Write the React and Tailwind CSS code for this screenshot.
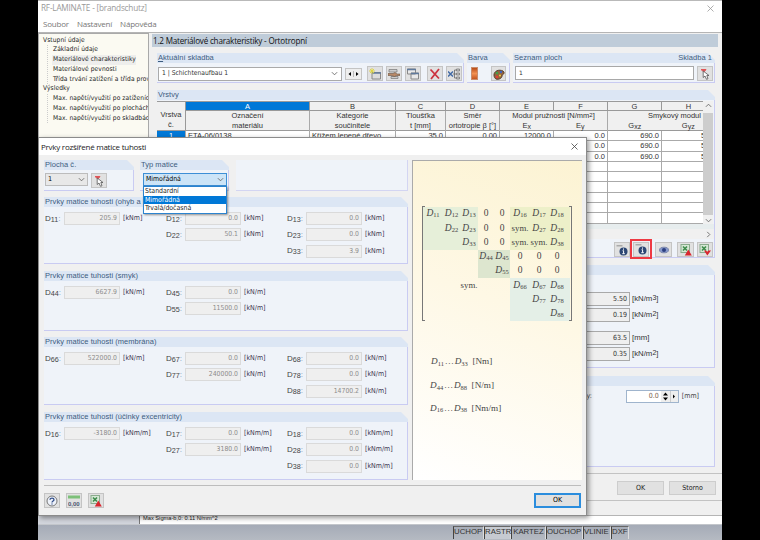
const matrixGroups = [
  {
    title: "Prvky matice tuhosti (ohyb a krut)",
    unit: "[kNm]",
    className: "mt-[6px] h-[67px]",
    rows: [
      [["11", "205.9"], ["12", "0.0"], ["13", "0.0"]],
      [null, ["22", "50.1"], ["23", "0.0"]],
      [null, null, ["33", "3.9"]],
    ],
  },
  {
    title: "Prvky matice tuhosti (smyk)",
    unit: "[kN/m]",
    className: "mt-[7px] h-[60px]",
    rows: [
      [["44", "6627.9"], ["45", "0.0"], null],
      [null, ["55", "11500.0"], null],
    ],
  },
  {
    title: "Prvky matice tuhosti (membrána)",
    unit: "[kN/m]",
    className: "mt-[6px] h-[68px]",
    rows: [
      [["66", "522000.0"], ["67", "0.0"], ["68", "0.0"]],
      [null, ["77", "240000.0"], ["78", "0.0"]],
      [null, null, ["88", "14700.2"]],
    ],
  },
  {
    title: "Prvky matice tuhosti (účinky excentricity)",
    unit: "[kNm/m]",
    className: "mt-[7px] h-[68px]",
    rows: [
      [["16", "-3180.0"], ["17", "0.0"], ["18", "0.0"]],
      [null, ["27", "3180.0"], ["28", "0.0"]],
      [null, null, ["38", "0.0"]],
    ],
  },
]

const stiffness = [
  ["11", "12", "13", "0", "0", "16", "17", "18"],
  ["", "22", "23", "0", "0", "sym.", "27", "28"],
  ["", "", "33", "0", "0", "sym.", "sym.", "38"],
  ["", "", "", "44", "45", "0", "0", "0"],
  ["", "", "", "", "55", "0", "0", "0"],
  ["", "", "sym.", "", "", "66", "67", "68"],
  ["", "", "", "", "", "", "77", "78"],
  ["", "", "", "", "", "", "", "88"],
]

const columns = [
  { id: "A", top: "Označení", bottom: "materiálu" },
  { id: "B", top: "Kategorie", bottom: "součinitele" },
  { id: "C", top: "Tloušťka", bottom: "t [mm]" },
  { id: "D", top: "Směr", bottom: "ortotropie β [°]" },
  { id: "E", bottom: "E", sub: "x" },
  { id: "F", bottom: "E", sub: "y" },
  { id: "G", bottom: "G", sub: "xz" },
  { id: "H", bottom: "G", sub: "yz" },
]

const layers = [
  ["1", "ETA-06/0138", "Křížem lepené dřevo", "35.0", "0.00", "12000.0", "0.0", "690.0", "50.0"],
  ["2", "", "", "", "", "", "0.0", "690.0", "50.0"],
  ["3", "", "", "", "", "", "0.0", "690.0", "50.0"],
  [], [], [], [], [], [],
]

const tableGrid = "grid grid-cols-[29px_124px_86px_50px_54px_54px_54px_54px_54px]"

const Group = ({ title, right, className = "", children }) => (
  <div className={`flex flex-col ${className}`}>
    <div className="flex h-[10px] shrink-0 items-center justify-between bg-[#dce6f4] pr-[3px] pl-[1px] text-[7.5px] leading-none tracking-[0.05px] whitespace-nowrap text-[#3c5c80] [clip-path:polygon(0_0,calc(100%-7px)_0,100%_7px,100%_100%,0_100%)]">
      <span>{title}</span>
      {right && <span>{right}</span>}
    </div>
    <div className="min-h-0 flex-1 border-r border-b border-[#c9cbf2] bg-[#eff3f9]">{children}</div>
  </div>
)

const IconButton = ({ className = "w-[16px]", children }) => (
  <div className={`flex h-[15px] shrink-0 items-center justify-center border border-[#c4c4c4] bg-[#e1e1e1] ${className}`}>
    <svg width="12" height="12" viewBox="0 0 12 12" fill="none">
      {children}
    </svg>
  </div>
)

const Chevron = ({ className = "", d = "M1 2.5 4 5.5 7 2.5" }) => (
  <svg className={className} width="7" height="7" viewBox="0 0 8 8" fill="none" stroke="#666" strokeWidth="1">
    <path d={d} />
  </svg>
)

const PickIcon = () => (
  <>
    <path d="M2 1.5h5L5 4Z" fill="#e05558" stroke="#e05558" />
    <path d="M4.200 3v6.500l1.800-1.500 1.500 3.300 1.500-.6L7.800 7.500H10Z" fill="#fff" stroke="#555" strokeWidth=".8" />
  </>
)

const ExcelIcon = ({ down }) => (
  <>
    <rect x="1" y=".5" width="8.500" height="8" fill="#d5e8d5" stroke="#8aab8d" />
    <path d="m3 2.500 4 4M7 2.500l-4 4" stroke="#3d8b4b" strokeWidth="1.600" />
    <path d={down ? "M5 6.500h2l1.200 1.200L9.500 6.500H12L8.300 11.500Z" : "M4.800 11.500 8.300 5.500l3.500 6Z"} fill="#d9262f" />
  </>
)

const InfoIcon = () => (
  <>
    <path d="M.5 1h6v1.5h-6z" fill="#aaa" />
    <circle cx="7.5" cy="7.5" r="4" fill="#2c4674" />
    <path d="M7.5 4.5v1.2M6.6 6.7h1v2.8M6.3 9.7h2.5" stroke="#fff" strokeWidth="1" />
  </>
)

const Sym = ({ n }) => (
  <>
    <i>D</i>
    <span className="relative top-[1.5px] text-[6.5px]">{n}</span>
  </>
)

const Matrix = () => (
  <div className="relative mt-[45px] ml-[9px] h-[115px] w-[150px]">
    <div className="absolute inset-y-0 left-0 w-[3px] border-y border-l border-[#777]" />
    <div className="absolute inset-y-0 right-0 w-[3px] border-y border-r border-[#777]" />
    <div className="grid h-full grid-cols-[20px_17px_18px_16px_16px_20px_18px_22px] grid-rows-8 pt-px pl-px font-['Liberation_Serif',serif] text-[9.5px] leading-none text-[#454545]">
      {stiffness.map((row, r) =>
        row.map((cell, c) => {
          let bg = ""
          if (r < 3 && c < 3) bg = "bg-[#e6efd9]"
          if (r < 3 && c > 4) bg = "bg-[#edf0c9]"
          if ((r === 3 || r === 4) && (c === 3 || c === 4)) bg = "bg-[#dde6cf]"
          if (r > 4 && c > 4) bg = "bg-[#e4efe7]"
          return (
            <div key={`${r}-${c}`} className={`flex items-center justify-center whitespace-nowrap ${c === 7 ? "pr-[4px]" : ""} ${bg}`}>
              {cell.length === 2 ? <Sym n={cell} /> : cell === "sym." ? <span className="text-[8.8px]">sym.</span> : cell}
            </div>
          )
        }),
      )}
    </div>
  </div>
)

const Field = ({ entry, unit }) => {
  if (!entry) return <div />
  return (
    <div className="flex items-center">
      <div className="w-[19px] text-[8px] whitespace-nowrap text-[#444]">
        D<span className="relative top-[1px] text-[7.2px]">{entry[0]}</span>
        <span className="text-[#7b9ac0]">:</span>
      </div>
      <div className="h-[13px] w-[56px] border border-[#dadada] bg-[#efefef] pr-[2px] text-right font-['DejaVu_Sans_Condensed','DejaVu_Sans',sans-serif] text-[6.8px] leading-[11px] text-[#8c8c8c]">
        {entry[1]}
      </div>
      <div className="ml-[3px] font-['DejaVu_Sans_Condensed','DejaVu_Sans',sans-serif] text-[7px] whitespace-nowrap text-[#3c3550]">{unit}</div>
    </div>
  )
}

const Dialog = () => (
  <div className="absolute top-[137px] left-0 flex h-[379px] w-[549px] flex-col border border-[#8b8b8b] bg-[#f0f0f0] shadow-[2px_2px_5px_rgba(0,0,0,0.4)]">
    <div className="flex h-[17px] shrink-0 items-center justify-between bg-white pr-[8px] pl-[2px] font-['Open_Sans',sans-serif] text-[8px] tracking-[-0.25px] text-[#222]">
      <span>Prvky rozšířené matice tuhosti</span>
      <svg width="7" height="7" viewBox="0 0 7 7" stroke="#444" strokeWidth=".8">
        <path d="m.5.5 6 6m0-6-6 6" />
      </svg>
    </div>
    <div className="flex h-[330px] shrink-0 pt-[5px] pr-[4px] pl-[5px]">
      <div className="w-[364px]">
        <div className="flex h-[31px]">
          <Group title="Plocha č." className="w-[90px]">
            <div className="flex gap-[3px] pt-[3px] pl-[1px]">
              <div className="flex h-[13px] w-[43px] items-center justify-between border border-[#bcbcbc] bg-[#e8e8e8] px-[2px] font-['DejaVu_Sans',sans-serif] text-[6.5px]">
                1 <Chevron />
              </div>
              <IconButton><PickIcon /></IconButton>
            </div>
          </Group>
          <Group title="Typ matice" className="ml-[6px] w-[89px]">
            <div className="relative mt-[3px] ml-[3px] w-[84px] font-['DejaVu_Sans_Condensed','DejaVu_Sans',sans-serif] text-[6.9px]">
              <div className="flex h-[13px] items-center justify-between border border-[#3d8fd6] bg-[#cce4f7] px-[2px] text-black">
                Mimořádná <Chevron />
              </div>
              <div className="absolute top-[13px] left-0 z-10 w-full border border-[#2b83cf] bg-white leading-[8.6px] text-[#222] shadow-[1px_1px_2px_rgba(0,0,0,0.4)]">
                <div className="pl-[1px]">Standardní</div>
                <div className="bg-[#0078d7] pl-[1px] text-white">Mimořádná</div>
                <div className="pl-[1px]">Trvalá/dočasná</div>
              </div>
            </div>
          </Group>
          <div className="ml-[7px] flex-1 border-r border-b border-[#d3d5f2] bg-[#eff3f9]" />
        </div>
        {matrixGroups.map((group) => (
          <Group key={group.title} title={group.title} className={group.className}>
            <div className="flex flex-col gap-[3.3px] pt-[5px] pl-[1px]">
              {group.rows.map((row, i) => (
                <div key={i} className="grid h-[13px] grid-cols-[121px_121px_120px] leading-none">
                  {row.map((entry, j) => (
                    <Field key={j} entry={entry} unit={group.unit} />
                  ))}
                </div>
              ))}
            </div>
          </Group>
        ))}
      </div>
      <div className="ml-[4px] h-[320px] w-[170px] border-t border-l border-[#aaa] bg-[linear-gradient(200deg,#fcf3d3_0%,#fef8e5_45%,#ffffff_100%)]">
        <Matrix />
        <div className="mt-[34px] ml-[17px] font-['Liberation_Serif',serif] text-[9.2px] leading-[12px] whitespace-nowrap text-[#454545]">
          <div className="ml-px h-[12px]"><Sym n="11" />&#8202;…&#8202;<Sym n="33" />&ensp;[Nm]</div>
          <div className="mt-[12px] h-[12px]"><Sym n="44" />&#8202;…&#8202;<Sym n="88" />&ensp;[N/m]</div>
          <div className="mt-[10.5px] h-[12px]"><Sym n="16" />&#8202;…&#8202;<Sym n="38" />&ensp;[Nm/m]</div>
        </div>
      </div>
    </div>
    <div className="mx-[5px] flex flex-1 justify-between border-t border-[#bdbdbd] pt-[7px]">
      <div className="flex gap-[6px]">
        <IconButton>
          <circle cx="6" cy="6" r="5" fill="#eef2fa" stroke="#777" />
          <path d="M4 4.7c0-2 4-2 4 0 0 1.3-2 1.3-2 2.8M6 8.5v1" stroke="#34508a" strokeWidth="1.3" />
        </IconButton>
        <IconButton>
          <path d="M0 .5h12v3H0z" fill="#7cc079" />
          <text x="0" y="10.5" fontSize="6" fontWeight="bold" fill="#4a5570">0,00</text>
        </IconButton>
        <IconButton><ExcelIcon /></IconButton>
      </div>
      <div className="flex h-[15px] w-[47px] items-center justify-center border-2 border-[#2b8ddd] bg-[#e1e1e1] font-['DejaVu_Sans_Condensed',sans-serif] text-[7px]">OK</div>
    </div>
  </div>
)

const Tree = () => (
  <div className="h-[110px] w-[111px] shrink-0 overflow-hidden border border-[#a9a9a9] bg-[#fbfaf2] pt-[1.5px] pl-[4px] font-['DejaVu_Sans_Condensed','DejaVu_Sans',sans-serif] text-[6.6px] leading-[9.75px] tracking-[0.08px] whitespace-nowrap text-[#222]">
    <div>Vstupní údaje</div>
    <div className="ml-[4px] border-l border-dotted border-[#ccc] pl-[5px]">
      <div>Základní údaje</div>
      <div className="-ml-px w-fit bg-[#eeeeec] pl-px">Materiálové charakteristiky</div>
      <div>Materiálové pevnosti</div>
      <div>Třída trvání zatížení a třída provozu</div>
    </div>
    <div>Výsledky</div>
    <div className="ml-[4px] border-l border-dotted border-[#ccc] pl-[5px]">
      <div>Max. napětí/využití po zatíženích</div>
      <div>Max. napětí/využití po plochách</div>
      <div>Max. napětí/využití po skladbách</div>
    </div>
  </div>
)

const LayerTable = () => (
  <div className="flex h-[124px] pt-px">
    <div className="w-[546px] overflow-hidden bg-white text-[7.5px] text-[#333]">
      <div className={`${tableGrid} h-[30px] grid-rows-[9px_21px] border-t border-b border-[#9a9a9a] bg-[#f0f0f0] text-center leading-[10px] whitespace-nowrap`}>
        <div className="row-span-2 border-r border-[#999] pt-[8px]">Vrstva<br />č.</div>
        {columns.map(({ id }) => (
          <div key={id} className={`border-r border-b border-[#999] leading-[9px] ${id === "A" ? "bg-[#0078d7] text-white" : ""}`}>{id}</div>
        ))}
        {columns.slice(0, 4).map((col) => (
          <div key={col.id} className="border-r border-[#aaa]">{col.top}<br />{col.bottom}</div>
        ))}
        {[0, 1].map((pair) => (
          <div key={pair} className="col-span-2 border-r border-[#aaa]">
            {pair === 0 ? (
              <div>Modul pružnosti [N/mm<span className="relative -top-px text-[6px]">2</span>]</div>
            ) : (
              <div className="pl-[40px] text-left">Smykový modul [N/mm²]</div>
            )}
            <div className="grid grid-cols-2">
              {columns.slice(4 + pair * 2, 6 + pair * 2).map((col) => (
                <div key={col.id}>{col.bottom}<span className="relative top-px text-[7px]">{col.sub}</span></div>
              ))}
            </div>
          </div>
        ))}
      </div>
      {layers.map((row, i) => (
        <div key={i} className={`${tableGrid} h-[10.3px] leading-[10px] whitespace-nowrap`}>
          {Array.from({ length: 9 }, (_, c) => (
            <div
              key={c}
              className={`overflow-hidden border-r border-b border-[#aaa] px-[2px] ${c === 0 ? (i === 0 ? "bg-[#0078d7] text-center text-white" : "text-center") : c > 2 ? "text-right" : ""}`}
            >
              {c === 8 && row[c] ? <span className="block pl-[37px] text-left">{row[c]}</span> : row[c]}
            </div>
          ))}
        </div>
      ))}
    </div>
    <div className="flex w-[10px] flex-col items-center justify-between bg-[#f0f0f0] pt-px">
      <Chevron d="M1 5.5 4 2.5 7 5.5" />
      <div className="mt-[2px] h-[102px] w-full bg-[#cdcdcd]" />
      <Chevron />
    </div>
  </div>
)

const Result = ({ value, unit, power, className = "" }) => (
  <div className={`flex items-center justify-end pr-[3px] font-['DejaVu_Sans_Condensed','DejaVu_Sans',sans-serif] text-[7px] leading-none text-[#333] ${className}`}>
    <div className="h-[14px] w-[60px] border border-[#a9a9a9] bg-[#efefef] pr-[2px] text-right leading-[12px]">{value}</div>
    <div className="ml-[2px] w-[79px] font-['Liberation_Sans',sans-serif] text-[7.8px]">[{unit}{power && <span className="relative -top-px text-[7px]">{power}</span>}]</div>
  </div>
)

const MainPanel = () => (
  <div className="flex h-[482px] w-[571px] flex-col pt-px pl-px">
    <div className="h-[13px] w-[566px] shrink-0 bg-[#bfccd9] pl-[1px] font-['Open_Sans',sans-serif] text-[8.1px] leading-[13px] tracking-[-0.2px] text-[#111]">1.2 Materiálové charakteristiky - Ortotropní</div>
    <div className="mt-[6px] flex h-[30px] shrink-0 gap-[3px] pl-[5px]">
      <Group title={<><u>A</u>ktuální skladba</>} className="w-[307px]">
        <div className="flex items-center pt-[3px] pl-[1px]">
          <div className="flex h-[14px] w-[184px] items-center justify-between border border-[#aaa] bg-white px-[3px] font-['DejaVu_Sans_Condensed','DejaVu_Sans',sans-serif] text-[6.7px] text-[#333]">
            <span>1 | Schichtenaufbau 1</span> <Chevron />
          </div>
          <div className="mr-[5px] ml-[3px] flex h-[12px] w-[17px] items-center justify-around border border-[#c4c4c4] bg-[#eee]">
            <svg width="15" height="6" viewBox="0 0 15 6"><path d="M5 1v4L2.5 3ZM10 1v4l2.5-2Z" fill="#000" /><path d="M7.5-3v12" stroke="#bbb" /></svg>
          </div>
          <div className="flex">
            <IconButton>
              <path d="M3 4.5h8.5v6.5H3z" fill="#ddd" stroke="#888" />
              <path d="M3 5h9" stroke="#607a9c" strokeWidth="1.5" />
              <path d="M3 0v6M0 3h6M1 1l4 4m0-4L1 5" stroke="#e0d540" strokeWidth=".9" />
            </IconButton>
            <IconButton className="ml-[3px] w-[16px]">
              <path d="M1 1.500h8v2.500H1zM3 8.500h7v2H3z" fill="#ccc" stroke="#777" strokeWidth=".7" />
              <path d="M0 5.500h5l2-1 2 1.500h3v1.500H9L6.500 8.500 3 7.500H0Z" fill="#b98a68" stroke="#66503f" strokeWidth=".6" />
            </IconButton>
            <IconButton className="ml-[3px] w-[16px]">
              <path d="M.5 1h8v5h-8zM4 5h7.5v6H4z" fill="#e9e9e9" stroke="#888" />
              <path d="M0 1.5h9M4 5.5h8" stroke="#607a9c" strokeWidth="1.6" />
            </IconButton>
            <IconButton className="ml-[6px] w-[16px]">
              <path d="m1.500 1.500 8.500 9M10 1 2 11" stroke="#cc3340" strokeWidth="1.800" />
            </IconButton>
            <IconButton className="ml-[3px] w-[16px]">
              <path d="m0 3.500 5 5M5 3.500l-5 5" stroke="#416aa5" strokeWidth="1.500" />
              <path d="M6.500 2v8M6.500 2h2M5 6h3.500M6.500 10h2" stroke="#666" strokeWidth=".8" />
              <path d="M8.500 1h3v2h-3zM8.500 5h3v2h-3zM8.500 9h3v2h-3z" fill="#ccc" stroke="#777" strokeWidth=".8" />
            </IconButton>
          </div>
        </div>
      </Group>
      <Group title="Barva" className="w-[43px]">
        <div className="flex items-center gap-[13px] pt-[3px] pl-[4px]">
          <div className="h-[13px] w-[7px] border border-[#c98d6c] bg-linear-to-b from-[#b84b16] via-[#f29152] to-[#c4561f]" />
          <IconButton className="w-[15px]">
            <path d="M1 7c0-4 5-6 9-4 3 3-1 3-1 5s-3 4-6 3C2 10.500 1 9 1 7Z" fill="#96643c" stroke="#553d2d" />
            <circle cx="4" cy="5" r="1.3" fill="#41a047" />
            <circle cx="8" cy="4" r="1.2" fill="#3e64c0" />
            <circle cx="4" cy="9" r="1.3" fill="#e33d35" />
            <circle cx="7" cy="7.500" r="1" fill="#f0d23d" />
          </IconButton>
        </div>
      </Group>
      <Group title="Seznam ploch" right="Skladba 1" className="w-[202px]">
        <div className="flex gap-[3px] pt-[3px] pl-[2px]">
          <div className="h-[14px] w-[179px] border border-[#a8a8a8] bg-white pl-[3px] font-['DejaVu_Sans',sans-serif] text-[6px] leading-[11px] text-[#333]">1</div>
          <IconButton><PickIcon /></IconButton>
        </div>
      </Group>
    </div>
    <Group title="Vrstvy" className="mt-[7px] ml-[5px] h-[168px] w-[558px] shrink-0">
      <LayerTable />
      <div className="h-[5px] bg-[#e7edee]" />
      <div className="flex h-[10px] items-center justify-end bg-[#f0f0f0] pr-[2px]">
        <Chevron d="M2.500 1 5.500 4 2.500 7" />
      </div>
      <div className="flex justify-end pt-[3px] pr-[1px]">
        <IconButton><InfoIcon /></IconButton>
        <div className="-mt-[3px] flex h-[20px] w-[22px] items-center justify-center border-2 border-[#ee3a43]">
          <IconButton><InfoIcon /></IconButton>
        </div>
        <IconButton className="ml-[3px] w-[17px]">
          <ellipse cx="6" cy="6" rx="4.500" ry="2.800" fill="#8799cc" stroke="#7d89ad" />
          <circle cx="6" cy="6" r="2" fill="#2b3f80" />
        </IconButton>
        <IconButton className="ml-[5px] w-[17px]"><ExcelIcon /></IconButton>
        <IconButton className="ml-[3px] w-[16px]"><ExcelIcon down /></IconButton>
      </div>
    </Group>
    <Group className="mt-[7px] ml-[5px] h-[103px] w-[558px] shrink-0">
      <Result value="5.50" unit="kN/m" power="3" className="mt-[17px]" />
      <Result value="0.19" unit="kN/m" power="2" className="mt-[2px]" />
      <Result value="63.5" unit="mm" className="mt-[9px]" />
      <Result value="0.35" unit="kN/m" power="2" className="mt-[2px]" />
    </Group>
    <Group className="mt-[8px] ml-[5px] h-[91px] w-[558px] shrink-0">
      <div className="mt-[4px] flex items-center justify-end pr-[15px] font-['DejaVu_Sans_Condensed','DejaVu_Sans',sans-serif] text-[7px] leading-none text-[#444]">
        <span className="mr-[34px]">y:</span>
        <div className="flex h-[13px] w-[53px] items-center justify-end border border-[#9fb4cd] bg-white text-[#7c6552]">
          0.0
          <svg className="ml-[2px]" width="17" height="11" viewBox="0 0 17 11">
            <path d="M0 0h17v11H0z" fill="#eee" />
            <path d="M2 4.500 4.500 1.500 7 4.500ZM2 6.500 4.500 9.500 7 6.500ZM12 3.500v4l2-2Z" fill="#000" />
            <path d="M9.500 0v11" stroke="#ccc" />
          </svg>
        </div>
        <span className="ml-[3px]">[mm]</span>
      </div>
    </Group>
    <div className="mt-[6px] flex h-[28px] shrink-0 justify-end gap-[5px] border-t border-b border-[#c3c3c3] pt-[7px] pr-[6px] font-['DejaVu_Sans_Condensed','DejaVu_Sans',sans-serif] text-[7px] text-[#222]">
      <div className="flex h-[14px] w-[47px] items-center justify-center border border-[#cdcdcd] bg-[#e1e1e1]">OK</div>
      <div className="flex h-[14px] w-[47px] items-center justify-center border border-[#cdcdcd] bg-[#e1e1e1]">Storno</div>
    </div>
  </div>
)

const StatusBar = () => (
  <div className="flex h-[16px] shrink-0 border-t border-[#c3c6cb] bg-linear-to-b from-[#a5abb7] to-[#b5bac2] pl-[415px] text-[7.8px] leading-[10px] text-[#333]">
    {[
      ["UCHOP", "w-[31px]"],
      ["RASTR", "w-[27px] bg-[#c6cad1]"],
      ["KARTEZ", "w-[35px] text-center"],
      ["OUCHOP", "w-[37px]"],
      ["VLINIE", "w-[28px]"],
      ["DXF", "w-[18px]"],
    ].map(([label, cls]) => (
      <div key={label} className={`mt-px h-[13px] border-t border-r border-l border-t-[#666] border-r-[#ddd] border-l-[#444] ${cls}`}>{label}</div>
    ))}
  </div>
)

export default function App() {
  return (
    <div className="flex h-[540px] w-[760px] justify-center overflow-hidden bg-black font-['Liberation_Sans',sans-serif]">
      <div className="relative flex w-[684px] flex-col overflow-hidden bg-white">
        <div className="h-[32px] shrink-0 border-t border-[#b9b9b9] px-[3px] font-['Open_Sans',sans-serif] leading-none tracking-[-0.2px]">
          <div className="flex h-[15px] items-center justify-between pr-[5px] text-[8.2px] text-[#999]">
            <span>RF-LAMINATE - [brandschutz]</span>
            <svg width="7" height="7" viewBox="0 0 7 7" stroke="#999" strokeWidth=".8">
              <path d="m.5.5 6 6m0-6-6 6" />
            </svg>
          </div>
          <div className="flex h-[15px] items-center gap-[8px] pl-[2px] text-[8px] text-[#777]">
            <span>Soubor</span>
            <span>Nastavení</span>
            <span>Nápověda</span>
          </div>
        </div>
        <div className="flex h-[484px] shrink-0 gap-[2px] border-t border-b border-[#b5b5b5] bg-[#f0f0f0]">
          <Tree />
          <MainPanel />
        </div>
        <div className="flex h-[8px] shrink-0 bg-[#d2d5dc] pl-[101px]">
          <div className="flex-1 border-l border-[#777] bg-white pl-[3px] text-[5.7px] leading-[4px] text-[#222]">Max Sigma-b,0: 0.11 N/mm^2</div>
        </div>
        <StatusBar />
        <Dialog />
      </div>
    </div>
  )
}
